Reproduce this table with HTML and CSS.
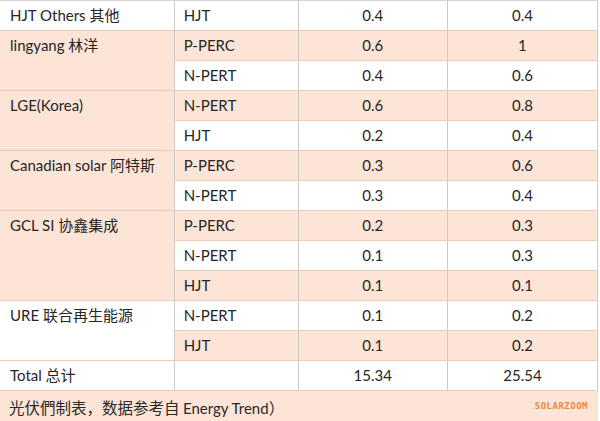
FILE: index.html
```html
<!DOCTYPE html>
<html>
<head>
<meta charset="utf-8">
<link rel="stylesheet" href="styles.css">
</head>
<body>
<div class="wrap">
<table class="grid">
<colgroup><col class="c1"><col class="c2"><col class="c3"><col class="c4"></colgroup>
<tr class="w"><td class="name w">HJT Others 其他</td><td class="tech">HJT</td><td class="num">0.4</td><td class="num">0.4</td></tr>
<tr class="p"><td class="name p" rowspan="2">lingyang 林洋</td><td class="tech">P-PERC</td><td class="num">0.6</td><td class="num">1</td></tr>
<tr class="w"><td class="tech">N-PERT</td><td class="num">0.4</td><td class="num">0.6</td></tr>
<tr class="p"><td class="name p" rowspan="2">LGE(Korea)</td><td class="tech">N-PERT</td><td class="num">0.6</td><td class="num">0.8</td></tr>
<tr class="w"><td class="tech">HJT</td><td class="num">0.2</td><td class="num">0.4</td></tr>
<tr class="p"><td class="name p" rowspan="2">Canadian solar 阿特斯</td><td class="tech">P-PERC</td><td class="num">0.3</td><td class="num">0.6</td></tr>
<tr class="w"><td class="tech">N-PERT</td><td class="num">0.3</td><td class="num">0.4</td></tr>
<tr class="p"><td class="name p" rowspan="3">GCL SI 协鑫集成</td><td class="tech">P-PERC</td><td class="num">0.2</td><td class="num">0.3</td></tr>
<tr class="w"><td class="tech">N-PERT</td><td class="num">0.1</td><td class="num">0.3</td></tr>
<tr class="p"><td class="tech">HJT</td><td class="num">0.1</td><td class="num">0.1</td></tr>
<tr class="w"><td class="name w" rowspan="2">URE 联合再生能源</td><td class="tech">N-PERT</td><td class="num">0.1</td><td class="num">0.2</td></tr>
<tr class="p"><td class="tech">HJT</td><td class="num">0.1</td><td class="num">0.2</td></tr>
<tr class="w"><td class="name w">Total 总计</td><td class="tech"></td><td class="num">15.34</td><td class="num">25.54</td></tr>
</table>
<div class="foot">
<span class="note">光伏們制表，数据参考自 <span class="lat">Energy Trend</span>）</span>
<span class="mark">SOLARZOOM</span>
</div>
</div>
</body>
</html>
```
FILE: styles.css
```css
html, body {
  margin: 0;
  padding: 0;
  background: #ffffff;
}
.wrap {
  width: 598px;
  position: relative;
  font-family: Lato, "Noto Sans CJK SC", sans-serif;
  color: #262626;
}
.grid {
  border-collapse: collapse;
  table-layout: fixed;
  width: 598px;
  font-size: 15px;
}
.c1 { width: 174px; }
.c2 { width: 124px; }
.c3 { width: 149px; }
.c4 { width: 150px; }
.grid td {
  height: 29px;
  padding: 0;
  border-top: 1px solid #ecccb8;
  border-bottom: 1px solid #ecccb8;
  border-left: 1px solid #d6d0cc;
  border-right: 1px solid #cfc9c5;
  line-height: 29px;
  white-space: nowrap;
  overflow: hidden;
}
tr.p td { background: #fce4d6; }
tr.w td { background: #ffffff; }
.grid td.name.p { background: #fce4d6; }
.grid td.name.w { background: #ffffff; }
.grid td.name {
  vertical-align: top;
  padding-left: 10px;
  border-left: none;
}
.grid td.tech { padding-left: 9px; }
.grid td.num { text-align: center; }
.grid tr:first-child td { border-top: 1px solid #d8d2ce; }
.foot {
  height: 31px;
  background: #fce4d6;
  border-bottom: 1px solid #dccbc0;
  display: flex;
  align-items: center;
  padding-left: 9px;
  position: relative;
}
.note {
  font-size: 15.5px;
  color: #2a2a2a;
  font-family: "Noto Sans CJK SC", sans-serif;
}
.note .lat {
  font-family: Lato, sans-serif;
  font-size: 15px;
}
.mark {
  position: absolute;
  right: 10px;
  top: 10px;
  font-family: "DejaVu Sans Mono", monospace;
  font-size: 9px;
  font-weight: bold;
  color: #e88a3a;
  letter-spacing: 0.5px;
}
```
